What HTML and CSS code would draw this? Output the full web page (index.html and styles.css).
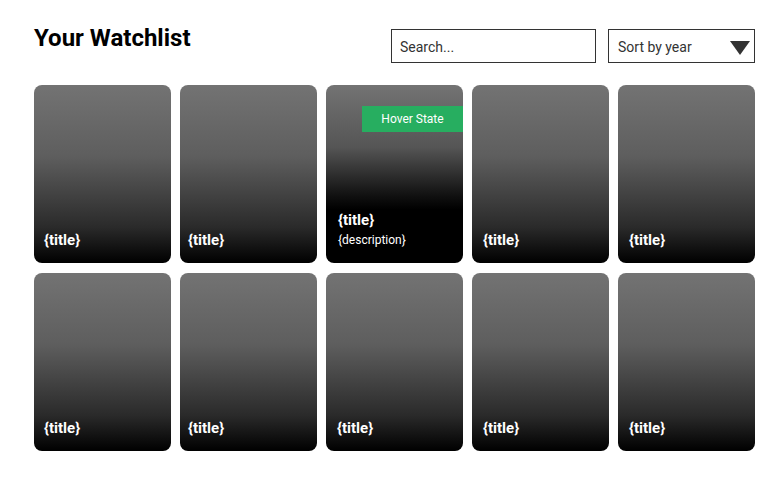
FILE: index.html
```html
<!DOCTYPE html>
<html>
<head>
<meta charset="utf-8">
<link rel="stylesheet" href="styles.css">
</head>
<body>
<div class="page">
  <header class="header">
    <h1 class="title">Your Watchlist</h1>
    <div class="controls">
      <div class="search">Search...</div>
      <div class="sort">
        <span>Sort by year</span>
        <svg class="caret" width="20" height="14" viewBox="0 0 20 14"><polygon points="0,0 20,0 10,14" fill="#333"/></svg>
      </div>
    </div>
  </header>
  <main class="grid">
    <div class="card"><div class="card-title">{title}</div></div>
    <div class="card c2"><div class="card-title">{title}</div></div>
    <div class="card hover">
      <div class="badge">Hover State</div>
      <div class="card-title">{title}</div>
      <div class="card-desc">{description}</div>
    </div>
    <div class="card c4"><div class="card-title">{title}</div></div>
    <div class="card c4"><div class="card-title">{title}</div></div>
    <div class="card"><div class="card-title">{title}</div></div>
    <div class="card c2"><div class="card-title">{title}</div></div>
    <div class="card c3"><div class="card-title">{title}</div></div>
    <div class="card c4"><div class="card-title">{title}</div></div>
    <div class="card c4"><div class="card-title">{title}</div></div>
  </main>
</div>
</body>
</html>
```
FILE: styles.css
```css
* { box-sizing: border-box; }
body {
  margin: 0;
  background: #fff;
  font-family: Roboto, "Liberation Sans", sans-serif;
  color: #000;
}
.page {
  padding: 23px 28px 0 34px;
}
.header {
  display: flex;
  justify-content: space-between;
  align-items: flex-start;
  height: 62px;
}
.title {
  margin: 0;
  font-size: 24px;
  font-weight: 700;
  line-height: 30px;
}
.controls {
  display: flex;
  gap: 12px;
  padding-top: 6px;
}
.search {
  width: 205px;
  height: 34px;
  border: 1px solid #333;
  padding: 1px 8px 0;
  font-size: 14px;
  line-height: 32px;
  color: #333;
}
.sort {
  width: 147px;
  height: 34px;
  border: 1px solid #333;
  padding: 1px 4px 0 9px;
  display: flex;
  align-items: center;
  justify-content: space-between;
  font-size: 14px;
  color: #333;
}
.caret { margin-top: 3px; }
.grid {
  display: grid;
  grid-template-columns: repeat(5, 137px);
  column-gap: 9px;
  row-gap: 10px;
}
.card {
  position: relative;
  height: 178px;
  border-radius: 8px;
  background: linear-gradient(to bottom, #737373 0%, #5e5e5e 40%, #2a2a2a 80%, #000 100%);
  display: flex;
  flex-direction: column;
  justify-content: flex-end;
  padding: 0 10px 14px;
  color: #fff;
  overflow: hidden;
}
.card.c2 { padding-left: 8px; }
.card.c3 { padding-left: 11px; }
.card.c4 { padding-left: 11px; }
.card.hover {
  background: linear-gradient(to bottom, #737373 0%, #555 35%, #111 62%, #000 70%, #000 100%);
  padding-bottom: 14px;
  padding-left: 12px;
}
.card-title {
  font-size: 15px;
  font-weight: 700;
  line-height: 18px;
}
.card-desc {
  font-size: 12px;
  line-height: 18px;
  margin-top: 2px;
}
.badge {
  position: absolute;
  top: 21px;
  right: 0;
  width: 101px;
  height: 26px;
  background: #27ae60;
  color: #fff;
  font-size: 12px;
  line-height: 26px;
  text-align: center;
}
```
